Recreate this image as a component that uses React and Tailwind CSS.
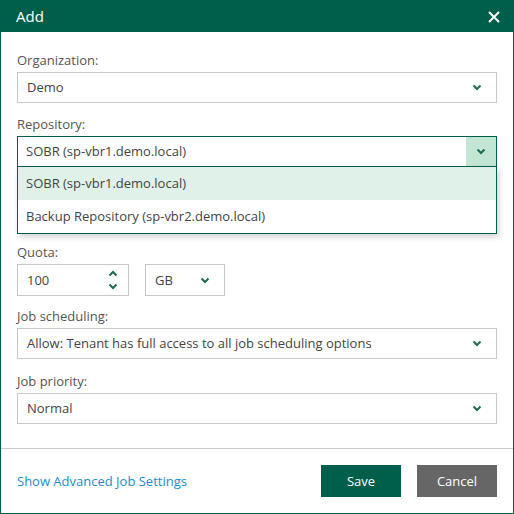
import React from "react";

const Chevron = ({ className = "" }) => (
  <svg viewBox="0 0 10 7" className={`w-[10px] h-[7px] ${className}`} fill="none">
    <path d="M1.5 1.5 L5 5 L8.5 1.5" stroke="#1e6a52" strokeWidth="2" />
  </svg>
);

const ChevronUp = () => (
  <svg viewBox="0 0 10 7" className="w-[10px] h-[7px]" fill="none">
    <path d="M1.5 5.5 L5 2 L8.5 5.5" stroke="#1e6a52" strokeWidth="2" />
  </svg>
);

const Label = ({ children }) => (
  <div className="text-[13px] leading-[18px] text-[#555] mb-[3px]">{children}</div>
);

const Select = ({ value, className = "" }) => (
  <div
    className={`h-[31px] border border-[#c8c8c8] bg-white flex items-center justify-between pl-[9px] pr-[14px] text-[13px] text-[#444] ${className}`}
  >
    <span className="pt-[1px]">{value}</span>
    <Chevron />
  </div>
);

const App = () => {
  const repoOptions = ["SOBR (sp-vbr1.demo.local)", "Backup Repository (sp-vbr2.demo.local)"];

  return (
    <div
      className="w-[514px] h-[514px] bg-white border border-[#005f4b] flex flex-col"
      style={{ fontFamily: '"Open Sans", "Noto Sans", sans-serif' }}
    >
      {/* Header */}
      <div className="h-[31px] bg-[#005f4b] flex items-center justify-between pl-[15px] pr-[13px] shrink-0">
        <span className="text-white text-[15px]">Add</span>
        <svg viewBox="0 0 12 12" className="w-[12px] h-[12px]" fill="none">
          <path d="M1 1 L11 11 M11 1 L1 11" stroke="white" strokeWidth="2" />
        </svg>
      </div>

      {/* Body */}
      <div className="flex-1 px-4 pt-[19px] flex flex-col gap-[12px]">
        <div>
          <Label>Organization:</Label>
          <Select value="Demo" />
        </div>

        <div className="relative z-10">
          <Label>Repository:</Label>
          <div className="h-[31px] border border-[#005f4b] bg-white flex items-stretch text-[13px] text-[#444]">
            <span className="flex-1 flex items-center pl-[8px] pt-[1px]">SOBR (sp-vbr1.demo.local)</span>
            <span className="w-[30px] bg-[#c3e6d4] flex items-center justify-center">
              <Chevron />
            </span>
          </div>
          <div className="absolute left-0 right-0 top-[52px] bg-white border border-t-0 border-[#005f4b] shadow-[2px_3px_6px_rgba(0,0,0,0.18)]">
            {repoOptions.map((opt, i) => (
              <div
                key={opt}
                className={`h-[33px] flex items-center pl-[8px] pt-[1px] text-[13px] text-[#444] ${
                  i === 0 ? "bg-[#dff1e8]" : "bg-white"
                }`}
              >
                {opt}
              </div>
            ))}
          </div>
        </div>

        {/* field hidden under the open list */}
        <div className="h-[52px]" />

        <div>
          <Label>Quota:</Label>
          <div className="flex gap-[16px]">
            <div className="w-[112px] h-[32px] border border-[#c8c8c8] flex items-center justify-between pl-[9px] pr-[10px] text-[13px] text-[#444]">
              <span className="pt-[1px]">100</span>
              <div className="flex flex-col gap-[6px]">
                <ChevronUp />
                <Chevron />
              </div>
            </div>
            <Select value="GB" className="w-[80px] h-[32px] pr-[10px]" />
          </div>
        </div>

        <div className="-mt-[1px]">
          <Label>Job scheduling:</Label>
          <Select value="Allow: Tenant has full access to all job scheduling options" />
        </div>

        <div className="mt-[1px]">
          <Label>Job priority:</Label>
          <Select value="Normal" />
        </div>
      </div>

      {/* Footer */}
      <div className="h-[65px] shrink-0 border-t border-[#c8c8c8] flex items-center justify-between pl-4 pr-4">
        <button className="text-[13px] text-[#1a8dcc] pt-[1px]">Show Advanced Job Settings</button>
        <div className="flex gap-[16px]">
          <button className="w-[80px] h-[32px] bg-[#005f4b] text-white text-[13px] pt-[1px]">Save</button>
          <button className="w-[80px] h-[32px] bg-[#666666] text-white text-[13px] pt-[1px]">Cancel</button>
        </div>
      </div>
    </div>
  );
};

export default App;
